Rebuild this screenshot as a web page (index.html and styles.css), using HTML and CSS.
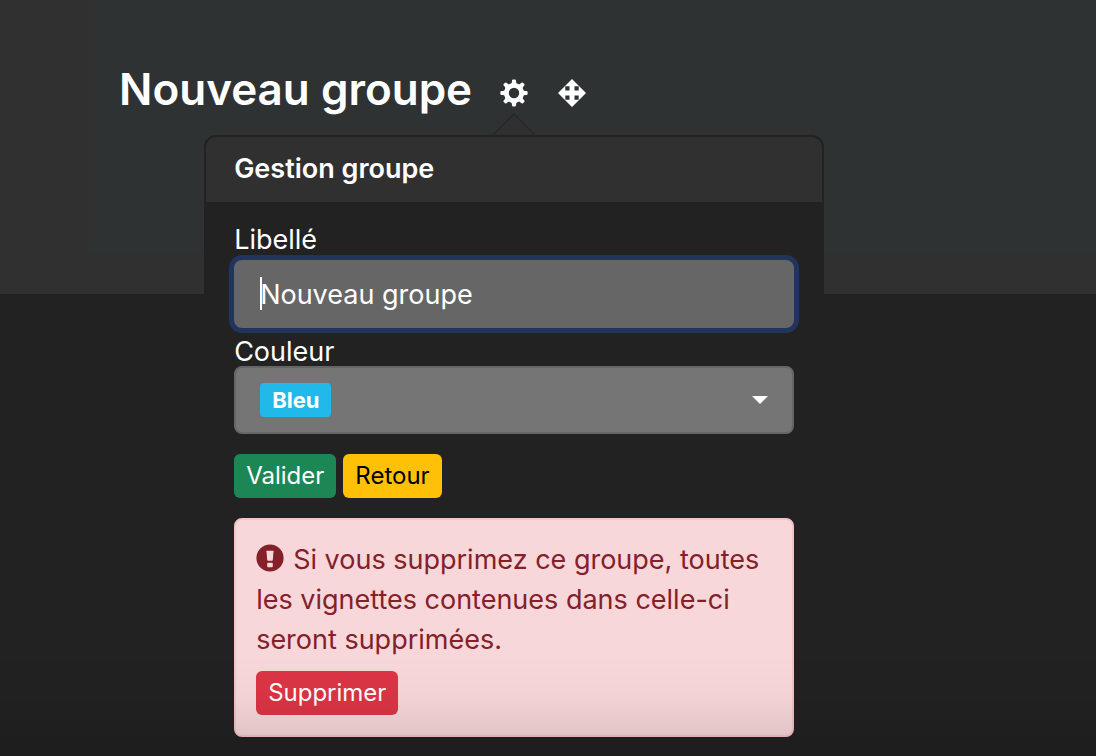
FILE: index.html
```html
<!DOCTYPE html>
<html lang="fr">
<head>
<meta charset="utf-8">
<meta name="viewport" content="width=device-width, initial-scale=1">
<title>Gestion groupe</title>
<link rel="stylesheet" href="styles.css">
</head>
<body>
<main class="board">
  <section class="group">
    <header class="group-head">
      <h1 class="group-title">Nouveau groupe</h1>
      <div class="anchor">
        <button class="icon-button" type="button" aria-label="Paramètres" aria-expanded="true">
          <svg class="icon" viewBox="0 0 28 28" aria-hidden="true">
            <g fill="#fff">
              <path id="tooth" d="M10.6 5.6Q11.7 4.6 11.9 3L12 1.4q.2-1 1.1-1h1.8q.9 0 1.1 1L16.1 3q.2 1.600 1.300 2.600z"/>
              <use href="#tooth" transform="rotate(45 14 14)"/>
              <use href="#tooth" transform="rotate(90 14 14)"/>
              <use href="#tooth" transform="rotate(135 14 14)"/>
              <use href="#tooth" transform="rotate(180 14 14)"/>
              <use href="#tooth" transform="rotate(225 14 14)"/>
              <use href="#tooth" transform="rotate(270 14 14)"/>
              <use href="#tooth" transform="rotate(315 14 14)"/>
            </g>
            <circle cx="14" cy="14" r="7.6" fill="none" stroke="#fff" stroke-width="4.8"/>
          </svg>
        </button>
        <div class="popover" role="dialog" aria-labelledby="popover-title">
          <svg class="popover-arrow" viewBox="0 0 44 22" aria-hidden="true">
            <path d="M1 22 22 1 43 22z" fill="#303030"/>
            <path d="M1 22 22 1 43 22" fill="none" stroke="#272828" stroke-width="1.5"/>
          </svg>
          <h2 class="popover-title" id="popover-title">Gestion groupe</h2>
          <form class="popover-body">
            <label class="label" for="libelle">Libellé</label>
            <div class="field">
              <input class="control focused" id="libelle" type="text" value="Nouveau groupe">
              <span class="caret"></span>
            </div>
            <label class="label label-color" for="couleur">Couleur</label>
            <button class="control picker" id="couleur" type="button" aria-haspopup="listbox">
              <span class="badge">Bleu</span>
              <svg class="chevron" viewBox="0 0 16 8" aria-hidden="true"><path d="M0 0h16L8 8z" fill="#fff"/></svg>
            </button>
            <div class="actions">
              <button class="btn btn-success" type="button">Valider</button>
              <button class="btn btn-warning" type="button">Retour</button>
            </div>
            <div class="alert" role="alert">
              <p class="alert-text"><svg class="alert-icon" viewBox="0 0 28 28" aria-hidden="true"><circle cx="14" cy="14" r="13.6" fill="#842029"/><path d="M10.5 7.3q0-.6.6-.6h5.8q.6 0 .6.6l-.7 8.800q-.1.7-.8.7h-4q-.7 0-.8-.7z" fill="#f8d7da"/><rect x="11.2" y="18.7" width="5.6" height="4.6" rx="1" fill="#f8d7da"/></svg>Si vous supprimez ce groupe, toutes les vignettes contenues dans celle-ci seront supprimées.</p>
              <button class="btn btn-danger" type="button">Supprimer</button>
            </div>
          </form>
        </div>
      </div>
      <button class="icon-button" type="button" aria-label="Déplacer">
        <svg class="icon" viewBox="0 0 28 28" aria-hidden="true">
          <path fill="#fff" fill-rule="evenodd" d="M14 0 28 14 14 28 0 14zM7.300 7.300v4.200h4.200V7.300zM16.500 7.300v4.200h4.200V7.300zM7.300 16.500v4.200h4.200v-4.200zM16.500 16.500v4.200h4.200v-4.200z"/>
        </svg>
      </button>
    </header>
  </section>
</main>
</body>
</html>
```
FILE: styles.css
```css
* {
  box-sizing: border-box;
}

html {
  min-height: 100%;
  background: #222;
}

body {
  margin: 0;
  min-height: 100vh;
  overflow: hidden;
  background: #222;
  color: #fff;
  font-family: Inter, "Liberation Sans", sans-serif;
  font-size: 27px;
  line-height: 40px;
}

body::after {
  content: "";
  position: fixed;
  inset: auto 0 0;
  height: 100px;
  background: linear-gradient(transparent, rgba(0, 0, 0, 0.02) 40%, rgba(0, 0, 0, 0.12));
  pointer-events: none;
}

button,
input {
  font: inherit;
  color: inherit;
}

.board {
  padding: 0 0 40px 89px;
  background: #303030;
}

.group {
  min-height: 254px;
  padding: 60px 30px;
  background: #2e3232;
}

.group-head {
  display: flex;
  align-items: center;
}

.group-title {
  margin: 0 28px 0 0;
  font-size: 44px;
  line-height: 58px;
  font-weight: 600;
}

.anchor {
  position: relative;
  display: flex;
  margin-right: 30px;
}

.icon-button {
  display: flex;
  margin-top: 8px;
  padding: 0;
  border: 0;
  background: none;
}

.icon {
  width: 28px;
  height: 28px;
}

.popover {
  position: absolute;
  top: 64px;
  left: 50%;
  width: 620px;
  margin-left: -310px;
  border: 2px solid #222;
  border-radius: 12px;
  background: #222;
}

.popover-arrow {
  position: absolute;
  bottom: 100%;
  left: 50%;
  width: 44px;
  height: 22px;
  margin: 0 0 2px -22px;
}

.popover-title {
  margin: 0;
  padding: 12px 28px 13px;
  border-radius: 10px 10px 0 0;
  background: #303030;
  font-size: 27px;
  line-height: 40px;
  font-weight: 600;
}

.popover-body {
  display: flex;
  flex-direction: column;
  padding: 24px 28px;
}

.label {
  margin-bottom: 6px;
  line-height: 28px;
}

.label-color {
  margin: 10px 0 0;
}

.field {
  position: relative;
  display: flex;
}

.control {
  width: 100%;
  height: 68px;
  padding: 0 24px;
  border: 2px solid #666;
  border-radius: 8px;
  background: #757575;
}

.focused {
  outline: 0;
  background: #666;
  box-shadow: 0 0 0 5px #20345d;
}

.caret {
  position: absolute;
  top: 17px;
  left: 26px;
  width: 2px;
  height: 33px;
  background: #fff;
}

.picker {
  display: flex;
  align-items: center;
  justify-content: space-between;
}

.badge {
  padding: 0 12px;
  border-radius: 4px;
  background: #20b9e9;
  font-size: 22px;
  line-height: 34px;
  font-weight: 700;
}

.chevron {
  width: 16px;
  height: 8px;
}

.actions {
  display: flex;
  gap: 7px;
  margin: 20px 0;
}

.btn {
  height: 44px;
  padding: 0 12px;
  border: 0;
  border-radius: 6px;
  font-size: 24px;
  line-height: 44px;
}

.btn-success {
  background: #1c8755;
}

.btn-warning {
  background: #ffc107;
  color: #000;
}

.btn-danger {
  background: #dc3545;
}

.alert {
  padding: 20px;
  border: 2px solid #f5c2c7;
  border-radius: 8px;
  background: #f8d7da;
  color: #842029;
}

.alert-text {
  margin: 0 0 11px;
}

.alert-icon {
  width: 28px;
  height: 28px;
  margin-right: 9px;
  vertical-align: -3px;
}

.alert .btn {
  display: block;
  color: #fff;
}
```
